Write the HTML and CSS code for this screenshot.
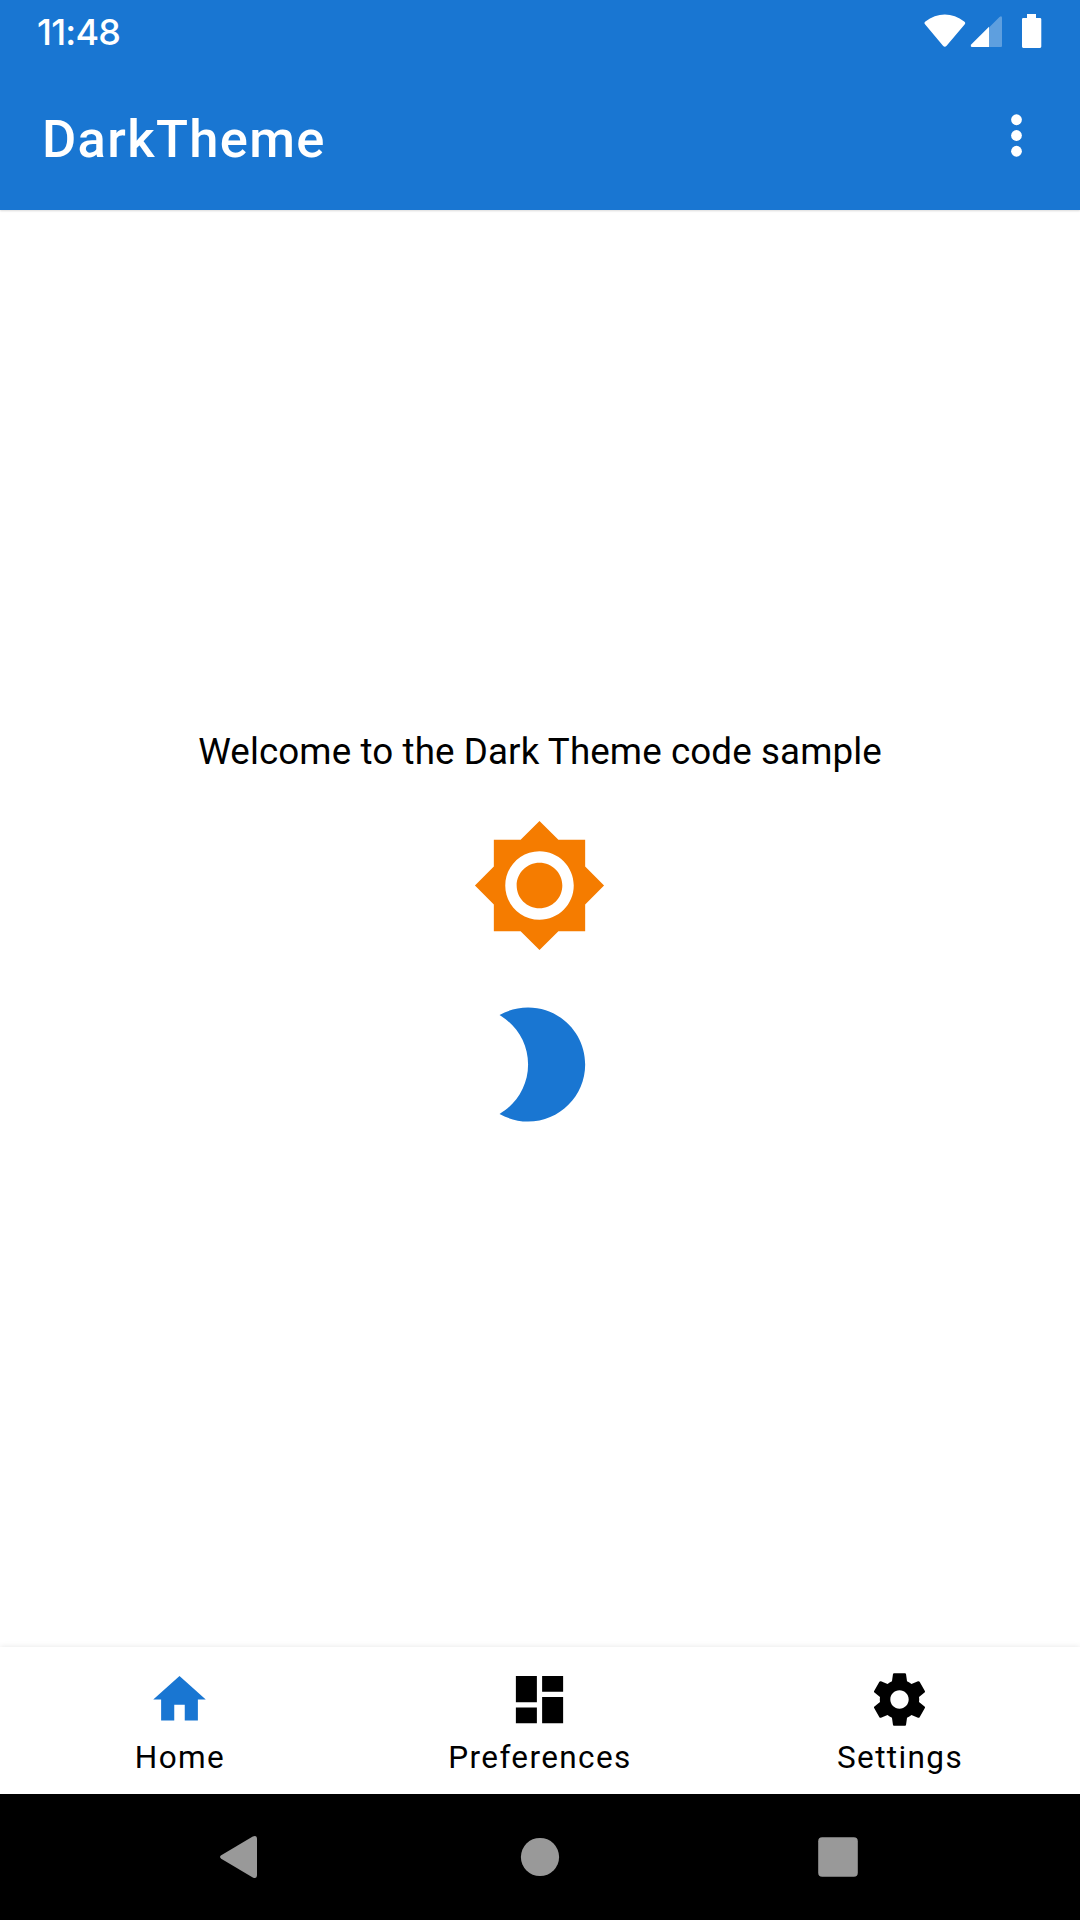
FILE: index.html
```html
<!DOCTYPE html>
<html lang="en">
<head>
<meta charset="utf-8">
<title>DarkTheme</title>
<link rel="stylesheet" href="styles.css">
</head>
<body>
<div class="screen">
  <header class="header">
    <div class="status-bar">
      <span class="clock">11:48</span>
      <svg class="status-icons" viewBox="0 0 118 36" aria-hidden="true">
        <path d="M1.2 10.4Q-.4 8.8 1.4 7.4C13.2-1.8 28.4-1.8 40.2 7.4Q42 8.8 40.6 10.4L22.6 31.8Q20.8 33.6 19 31.8Z"/>
        <path opacity=".3" d="M65 13.5L75.5 3Q78 1.3 78 4V32Q78 33 77 33H65Z"/>
        <path d="M65 12.8V33H48Q46 32.7 47.2 30.6Z"/>
        <path d="M103 0h9v4h4q1.300 0 1.300 1.300V32.600q0 1.300-1.300 1.300H99.300q-1.300 0-1.300-1.300V5.300q0-1.300 1.300-1.300H103z"/>
      </svg>
    </div>
    <div class="toolbar">
      <h1 class="title">DarkTheme</h1>
      <svg class="icon overflow" viewBox="0 0 24 24" aria-label="More options"><circle cx="12" cy="6" r="2.05"/><circle cx="12" cy="12" r="2.05"/><circle cx="12" cy="18" r="2.05"/></svg>
    </div>
  </header>

  <main class="content">
    <p class="welcome">Welcome to the Dark Theme code sample</p>
    <svg class="picture sun" viewBox="0 0 24 24" aria-hidden="true"><path d="M20 8.690V4h-4.690L12 .690 8.690 4H4v4.690L.690 12 4 15.310V20h4.690L12 23.310 15.310 20H20v-4.690L23.310 12 20 8.690zM12 18c-3.310 0-6-2.690-6-6s2.690-6 6-6 6 2.690 6 6-2.690 6-6 6zm0-10c-2.210 0-4 1.790-4 4s1.790 4 4 4 4-1.790 4-4-1.790-4-4-4z"/></svg>
    <svg class="picture moon" viewBox="0 0 24 24" aria-hidden="true"><path d="M10 2c-1.820 0-3.530.500-5 1.350C7.990 5.080 10 8.300 10 12s-2.010 6.920-5 8.650C6.470 21.500 8.180 22 10 22c5.520 0 10-4.480 10-10S15.520 2 10 2z"/></svg>
  </main>

  <nav class="tabs">
    <a class="tab active">
      <svg class="icon" viewBox="0 0 24 24" aria-hidden="true"><path d="M10 20v-6h4v6h5v-8h3L12 3 2 12h3v8z"/></svg>
      <span class="label">Home</span>
    </a>
    <a class="tab">
      <svg class="icon" viewBox="0 0 24 24" aria-hidden="true"><path d="M3 13h8V3H3v10zm0 8h8v-6H3v6zm10 0h8V11h-8v10zm0-18v6h8V3h-8z"/></svg>
      <span class="label">Preferences</span>
    </a>
    <a class="tab">
      <svg class="icon" viewBox="0 0 24 24" aria-hidden="true"><path d="M19.430 12.980c.04-.32.07-.64.07-.98s-.03-.66-.07-.98l2.110-1.650c.19-.15.24-.42.12-.64l-2-3.460c-.12-.22-.39-.3-.61-.22l-2.490 1c-.52-.4-1.080-.73-1.690-.98l-.38-2.650C14.460 2.180 14.250 2 14 2h-4c-.25 0-.46.18-.49.42l-.38 2.650c-.61.25-1.170.59-1.690.98l-2.490-1c-.23-.09-.49 0-.61.22l-2 3.460c-.13.22-.07.49.12.64l2.110 1.650c-.04.32-.07.65-.07.98s.03.66.07.98l-2.110 1.650c-.19.15-.24.42-.12.64l2 3.460c.12.22.39.3.61.22l2.490-1c.52.4 1.080.73 1.690.98l.38 2.650c.03.24.24.42.49.42h4c.25 0 .46-.18.49-.42l.38-2.650c.61-.25 1.170-.59 1.690-.98l2.490 1c.23.09.49 0 .61-.22l2-3.460c.12-.22.07-.49-.12-.64l-2.110-1.650zM12 15.500c-1.930 0-3.500-1.570-3.500-3.500s1.570-3.500 3.500-3.500 3.500 1.570 3.500 3.500-1.570 3.500-3.500 3.500z"/></svg>
      <span class="label">Settings</span>
    </a>
  </nav>

  <footer class="system-nav">
    <svg class="key" viewBox="0 0 48 48" aria-label="Back"><path d="M3.200 22.300L34.800 3.500Q38.900 1.700 39 6V42Q38.900 46.300 34.800 44.500L3.200 25.700Q.900 24 3.200 22.300Z"/></svg>
    <svg class="key" viewBox="0 0 48 48" aria-label="Home"><circle cx="24" cy="24" r="19.100"/></svg>
    <svg class="key" viewBox="0 0 48 48" aria-label="Recents"><rect x="4.200" y="4.200" width="39.600" height="39.600" rx="4"/></svg>
  </footer>
</div>
</body>
</html>
```
FILE: styles.css
```css
* {
  box-sizing: border-box;
}

body {
  margin: 0;
  background: #fff;
  color: #000;
  font-family: Roboto, "Liberation Sans", sans-serif;
}

.screen {
  display: flex;
  flex-direction: column;
  width: 1080px;
  height: 1920px;
  overflow: hidden;
}

.header {
  height: 210px;
  background: #1976d2;
  color: #fff;
  fill: #fff;
  box-shadow: 0 1px 2px rgba(0, 0, 0, 0.15);
}

.status-bar {
  display: flex;
  justify-content: space-between;
  align-items: flex-start;
  height: 63px;
  padding: 14px 38px 0 37px;
}

.clock {
  font: 500 36px/36px Inter, Roboto, sans-serif;
  letter-spacing: -0.8px;
}

.status-icons {
  width: 118px;
  height: 36px;
}

.toolbar {
  display: flex;
  justify-content: space-between;
  align-items: center;
  height: 147px;
  padding: 0 32px 0 42px;
}

.title {
  margin: 4px 0 0;
  font-size: 52.5px;
  font-weight: 500;
  line-height: 62px;
  letter-spacing: 1.35px;
}

.icon {
  display: block;
  width: 63px;
  height: 63px;
}

.overflow {
  margin-bottom: 2px;
}

.content {
  display: flex;
  flex: 1;
  flex-direction: column;
  align-items: center;
  padding-top: 519px;
}

.welcome {
  margin: 0 0 42px;
  font-size: 36.75px;
  line-height: 46px;
  letter-spacing: 0.1px;
  white-space: nowrap;
}

.picture {
  width: 137px;
  height: 137px;
  margin-right: 1px;
}

.sun {
  margin-bottom: 42px;
  fill: #f57c00;
}

.moon {
  fill: #1976d2;
}

.tabs {
  display: grid;
  grid-template-columns: repeat(3, 1fr);
  height: 147px;
  background: #fff;
  box-shadow: 0 0 6px rgba(0, 0, 0, 0.1);
}

.tab {
  display: flex;
  flex-direction: column;
  align-items: center;
  padding-top: 21px;
}

.tab .icon {
  margin-right: 1px;
}

.tab.active .icon {
  fill: #1976d2;
}

.label {
  margin-top: 8px;
  font-size: 31.5px;
  line-height: 38px;
  letter-spacing: 1.38px;
}

.system-nav {
  display: grid;
  grid-template-columns: repeat(3, 298px);
  place-content: center;
  place-items: center;
  height: 126px;
  background: #000;
  fill: #999;
}

.key {
  width: 48px;
  height: 48px;
}
```
